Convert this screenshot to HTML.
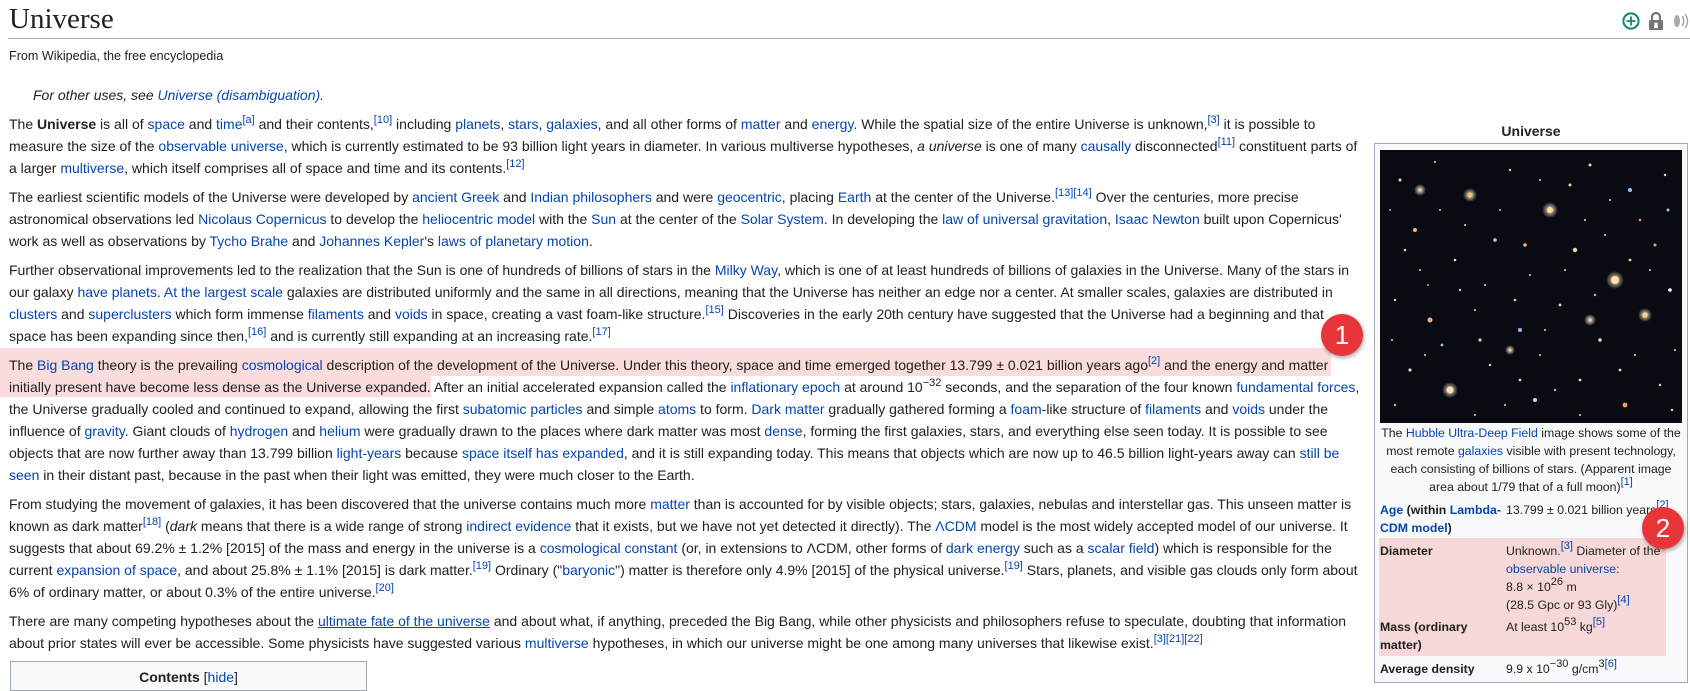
<!DOCTYPE html>
<html><head><meta charset="utf-8">
<style>
*{margin:0;padding:0;box-sizing:border-box}
body{width:1690px;height:677px;overflow:hidden;background:#fff;font-family:"Liberation Sans",Arial,sans-serif;color:#202122;position:relative}
a{color:#0645ad;text-decoration:none}
.p{position:absolute;left:9px;font-size:14px;line-height:22px;white-space:nowrap}
sup{font-size:11px;line-height:1;vertical-align:baseline;position:relative;top:-6px}
.hl{position:absolute;background:#fbdcdc}
.badge{position:absolute;width:42px;height:42px;border-radius:50%;background:#e8353a;color:#fff;font-size:26px;line-height:42px;text-align:center;box-shadow:1px 2px 4px rgba(0,0,0,.35)}
.ib{position:absolute;left:1374px;top:143px;width:314px;height:540px;border:1px solid #a2a9b1;background:#f8f9fa;font-size:12.3px}
.ib .r{position:absolute;line-height:18px;white-space:nowrap}
.ib b{font-weight:bold}
</style></head><body>
<div style="position:absolute;left:9px;top:0;font-family:'Liberation Serif',serif;font-size:29px;line-height:38px">Universe</div>
<div style="position:absolute;left:8px;right:0;top:38px;height:1px;background:#a2a9b1"></div>
<svg style="position:absolute;left:1622px;top:12px" width="18" height="18" viewBox="0 0 18 18"><circle cx="9" cy="9" r="7.6" fill="none" stroke="#14866d" stroke-width="2"/><path d="M9 4.5v9M4.5 9h9" stroke="#14866d" stroke-width="1.8"/></svg>
<svg style="position:absolute;left:1648px;top:11px" width="16" height="20" viewBox="0 0 16 20"><path d="M4 9V6a4 4 0 0 1 8 0v3" fill="none" stroke="#72777d" stroke-width="2.2"/><rect x="1" y="9" width="14" height="10" rx="1" fill="#72777d"/><circle cx="8" cy="13" r="1.6" fill="#fff"/><rect x="6" y="14.5" width="4" height="2.5" fill="#fff"/></svg>
<svg style="position:absolute;left:1672px;top:12px" width="18" height="18" viewBox="0 0 18 18"><ellipse cx="5" cy="9" rx="3" ry="6" fill="#aaa"/><path d="M10 4a8 8 0 0 1 0 10M13 2a11 11 0 0 1 0 14" fill="none" stroke="#aaa" stroke-width="1.5"/></svg>
<div style="position:absolute;left:9px;top:47px;font-size:12.6px;line-height:18px">From Wikipedia, the free encyclopedia</div>
<div class="p" style="top:84px;left:33px;font-style:italic">For other uses, see <a>Universe (disambiguation)</a>.</div>

<div class="hl" style="left:0;top:348px;width:1331px;height:28px"></div>
<div class="hl" style="left:0;top:376px;width:431px;height:21px"></div>

<div class="p" style="top:113px">The <b>Universe</b> is all of <a>space</a> and <a>time</a><sup><a>[a]</a></sup> and their contents,<sup><a>[10]</a></sup> including <a>planets</a>, <a>stars</a>, <a>galaxies</a>, and all other forms of <a>matter</a> and <a>energy</a>. While the spatial size of the entire Universe is unknown,<sup><a>[3]</a></sup> it is possible to<br>measure the size of the <a>observable universe</a>, which is currently estimated to be 93 billion light years in diameter. In various multiverse hypotheses, <i>a universe</i> is one of many <a>causally</a> disconnected<sup><a>[11]</a></sup> constituent parts of<br>a larger <a>multiverse</a>, which itself comprises all of space and time and its contents.<sup><a>[12]</a></sup></div>

<div class="p" style="top:186px">The earliest scientific models of the Universe were developed by <a>ancient Greek</a> and <a>Indian philosophers</a> and were <a>geocentric</a>, placing <a>Earth</a> at the center of the Universe.<sup><a>[13]</a><a>[14]</a></sup> Over the centuries, more precise<br>astronomical observations led <a>Nicolaus Copernicus</a> to develop the <a>heliocentric model</a> with the <a>Sun</a> at the center of the <a>Solar System</a>. In developing the <a>law of universal gravitation</a>, <a>Isaac Newton</a> built upon Copernicus'<br>work as well as observations by <a>Tycho Brahe</a> and <a>Johannes Kepler</a>'s <a>laws of planetary motion</a>.</div>

<div class="p" style="top:259px">Further observational improvements led to the realization that the Sun is one of hundreds of billions of stars in the <a>Milky Way</a>, which is one of at least hundreds of billions of galaxies in the Universe. Many of the stars in<br>our galaxy <a>have planets</a>. <a>At the largest scale</a> galaxies are distributed uniformly and the same in all directions, meaning that the Universe has neither an edge nor a center. At smaller scales, galaxies are distributed in<br><a>clusters</a> and <a>superclusters</a> which form immense <a>filaments</a> and <a>voids</a> in space, creating a vast foam-like structure.<sup><a>[15]</a></sup> Discoveries in the early 20th century have suggested that the Universe had a beginning and that<br>space has been expanding since then,<sup><a>[16]</a></sup> and is currently still expanding at an increasing rate.<sup><a>[17]</a></sup></div>

<div class="p" style="top:354px">The <a>Big Bang</a> theory is the prevailing <a>cosmological</a> description of the development of the Universe. Under this theory, space and time emerged together 13.799 ± 0.021 billion years ago<sup><a>[2]</a></sup> and the energy and matter<br>initially present have become less dense as the Universe expanded. After an initial accelerated expansion called the <a>inflationary epoch</a> at around 10<sup>−32</sup> seconds, and the separation of the four known <a>fundamental forces</a>,<br>the Universe gradually cooled and continued to expand, allowing the first <a>subatomic particles</a> and simple <a>atoms</a> to form. <a>Dark matter</a> gradually gathered forming a <a>foam</a>-like structure of <a>filaments</a> and <a>voids</a> under the<br>influence of <a>gravity</a>. Giant clouds of <a>hydrogen</a> and <a>helium</a> were gradually drawn to the places where dark matter was most <a>dense</a>, forming the first galaxies, stars, and everything else seen today. It is possible to see<br>objects that are now further away than 13.799 billion <a>light-years</a> because <a>space itself has expanded</a>, and it is still expanding today. This means that objects which are now up to 46.5 billion light-years away can <a>still be</a><br><a>seen</a> in their distant past, because in the past when their light was emitted, they were much closer to the Earth.</div>

<div class="p" style="top:493px">From studying the movement of galaxies, it has been discovered that the universe contains much more <a>matter</a> than is accounted for by visible objects; stars, galaxies, nebulas and interstellar gas. This unseen matter is<br>known as dark matter<sup><a>[18]</a></sup> (<i>dark</i> means that there is a wide range of strong <a>indirect evidence</a> that it exists, but we have not yet detected it directly). The <a>ΛCDM</a> model is the most widely accepted model of our universe. It<br>suggests that about 69.2% ± 1.2% [2015] of the mass and energy in the universe is a <a>cosmological constant</a> (or, in extensions to ΛCDM, other forms of <a>dark energy</a> such as a <a>scalar field</a>) which is responsible for the<br>current <a>expansion of space</a>, and about 25.8% ± 1.1% [2015] is dark matter.<sup><a>[19]</a></sup> Ordinary ("<a>baryonic</a>") matter is therefore only 4.9% [2015] of the physical universe.<sup><a>[19]</a></sup> Stars, planets, and visible gas clouds only form about<br>6% of ordinary matter, or about 0.3% of the entire universe.<sup><a>[20]</a></sup></div>

<div class="p" style="top:610px">There are many competing hypotheses about the <a style="text-decoration:underline">ultimate fate of the universe</a> and about what, if anything, preceded the Big Bang, while other physicists and philosophers refuse to speculate, doubting that information<br>about prior states will ever be accessible. Some physicists have suggested various <a>multiverse</a> hypotheses, in which our universe might be one among many universes that likewise exist.<sup><a>[3]</a><a>[21]</a><a>[22]</a></sup></div>

<div style="position:absolute;left:10px;top:661px;width:357px;height:30px;border:1px solid #a2a9b1;background:#f8f9fa;font-size:14px;text-align:center;padding-top:7px"><b>Contents</b> [<a>hide</a>]</div>

<div style="position:absolute;left:1374px;top:122px;width:314px;text-align:center;font-size:14px;font-weight:bold;line-height:18px">Universe</div>
<div class="ib">
<svg style="position:absolute;left:5px;top:6px" width="302" height="273" viewBox="0 0 302 273">
<defs><radialGradient id="g"><stop offset="0" stop-color="#fff0c8"/><stop offset="1" stop-color="#fff0c8" stop-opacity="0"/></radialGradient></defs>
<rect width="302" height="273" fill="#0a0a12"/>
<g fill="url(#g)">
<circle cx="90" cy="45" r="7"/><circle cx="170" cy="60" r="8"/><circle cx="235" cy="130" r="9"/><circle cx="70" cy="240" r="8"/><circle cx="265" cy="165" r="7"/><circle cx="210" cy="170" r="6"/><circle cx="40" cy="40" r="6"/><circle cx="130" cy="200" r="5"/>
</g>
<g fill="#e8d8b0">
<circle cx="20" cy="30" r="1.5"/><circle cx="55" cy="12" r="1"/><circle cx="90" cy="45" r="2.5" fill="#f2c070"/><circle cx="130" cy="20" r="1.2"/><circle cx="170" cy="60" r="3" fill="#ffdc90"/><circle cx="210" cy="15" r="1.5"/><circle cx="250" cy="40" r="2" fill="#9cc0ff"/><circle cx="285" cy="25" r="1.2"/>
<circle cx="35" cy="80" r="2" fill="#ffb070"/><circle cx="75" cy="110" r="1.3"/><circle cx="115" cy="90" r="1.8" fill="#a8c8ff"/><circle cx="150" cy="125" r="1"/><circle cx="195" cy="100" r="2.2"/><circle cx="235" cy="130" r="4" fill="#ffe0a0"/><circle cx="275" cy="95" r="1.5" fill="#ff9a70"/>
<circle cx="15" cy="150" r="1.2"/><circle cx="50" cy="170" r="2.5" fill="#f0b080"/><circle cx="95" cy="160" r="1"/><circle cx="140" cy="180" r="2" fill="#8fb8ff"/><circle cx="180" cy="155" r="1.4"/><circle cx="220" cy="190" r="1.8"/><circle cx="265" cy="165" r="2.6" fill="#ffd090"/><circle cx="295" cy="200" r="1"/>
<circle cx="30" cy="220" r="1.6"/><circle cx="70" cy="240" r="3.5" fill="#ffe0b0"/><circle cx="110" cy="215" r="1.2"/><circle cx="155" cy="250" r="2" fill="#c0d4ff"/><circle cx="200" cy="230" r="1.4"/><circle cx="245" cy="255" r="2.4" fill="#ff9860"/><circle cx="280" cy="235" r="1.2"/>
<circle cx="60" cy="60" r="1"/><circle cx="105" cy="135" r="1"/><circle cx="160" cy="205" r="1"/><circle cx="205" cy="70" r="1"/><circle cx="255" cy="205" r="1"/><circle cx="125" cy="255" r="1"/><circle cx="40" cy="120" r="1"/><circle cx="290" cy="140" r="1.8" fill="#ffffff"/>
<circle cx="10" cy="60" r="1" fill="#9cc0ff"/><circle cx="25" cy="100" r="1.3"/><circle cx="48" cy="135" r="1" fill="#ff9a70"/><circle cx="62" cy="195" r="1.4" fill="#9cc0ff"/><circle cx="85" cy="75" r="1"/><circle cx="100" cy="190" r="1.6" fill="#ffcc80"/><circle cx="120" cy="60" r="1" fill="#9cc0ff"/><circle cx="135" cy="150" r="1.3"/><circle cx="145" cy="95" r="1.8" fill="#ffb070"/><circle cx="160" cy="30" r="1"/><circle cx="175" cy="240" r="1.2" fill="#9cc0ff"/><circle cx="185" cy="120" r="1"/><circle cx="190" cy="35" r="1.5" fill="#ffd090"/><circle cx="215" cy="145" r="1.2" fill="#9cc0ff"/><circle cx="225" cy="85" r="1"/><circle cx="240" cy="220" r="1.4"/><circle cx="260" cy="70" r="1.2" fill="#ffb070"/><circle cx="270" cy="120" r="1"/><circle cx="288" cy="60" r="1.5" fill="#9cc0ff"/><circle cx="292" cy="260" r="1.2"/><circle cx="15" cy="255" r="1.2" fill="#ffb070"/><circle cx="45" cy="205" r="1"/><circle cx="80" cy="140" r="1.2" fill="#c0d4ff"/><circle cx="95" cy="265" r="1"/><circle cx="140" cy="230" r="1.4" fill="#ffcc80"/><circle cx="165" cy="180" r="1"/><circle cx="200" cy="265" r="1"/><circle cx="230" cy="50" r="1"/><circle cx="250" cy="110" r="1.4" fill="#ffd090"/><circle cx="12" cy="190" r="1"/>
</g></svg>
<div class="r" style="left:0;width:312px;top:280px;text-align:center">The <a>Hubble Ultra-Deep Field</a> image shows some of the<br>most remote <a>galaxies</a> visible with present technology,<br>each consisting of billions of stars. (Apparent image<br>area about 1/79 that of a full moon)<sup><a>[1]</a></sup></div>
<div class="r" style="left:5px;top:357px"><b><a>Age</a> (within <a>Lambda-</a></b><br><b><a>CDM model</a>)</b></div>
<div class="r" style="left:131px;top:357px">13.799 ± 0.021 billion years<sup><a>[2]</a></sup></div>
<div style="position:absolute;left:4px;top:394px;width:287px;height:118px;background:#f6d8d8"></div>
<div class="r" style="left:5px;top:398px"><b>Diameter</b></div>
<div class="r" style="left:131px;top:398px">Unknown.<sup><a>[3]</a></sup> Diameter of the<br><a>observable universe</a>:<br>8.8 × 10<sup>26</sup> m<br>(28.5 Gpc or 93 Gly)<sup><a>[4]</a></sup></div>
<div class="r" style="left:5px;top:474px"><b>Mass (ordinary</b><br><b>matter)</b></div>
<div class="r" style="left:131px;top:474px">At least 10<sup>53</sup> kg<sup><a>[5]</a></sup></div>
<div class="r" style="left:5px;top:516px"><b>Average density</b></div>
<div class="r" style="left:131px;top:516px">9.9 x 10<sup>−30</sup> g/cm<sup>3<a>[6]</a></sup></div>
</div>

<div class="badge" style="left:1321px;top:314px">1</div>
<div class="badge" style="left:1642px;top:507px">2</div>
</body></html>
